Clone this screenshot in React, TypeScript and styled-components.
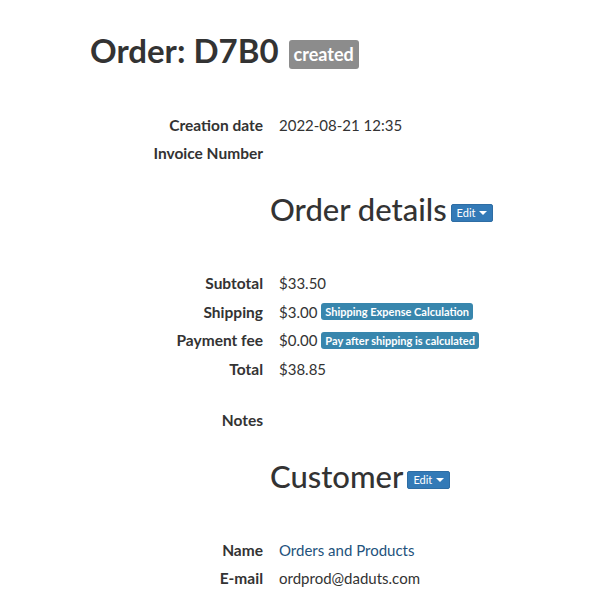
import React from 'react'
import styled, { createGlobalStyle } from 'styled-components'

const GlobalStyle = createGlobalStyle`
  body {
    margin: 0;
    background: #fff;
    color: #333;
    font-family: Lato, "Noto Sans", sans-serif;
    font-size: 15px;
  }
`

const Page = styled.main`
  padding: 26px 0 0 90px;
`

const Title = styled.h1`
  display: flex;
  align-items: center;
  gap: 10px;
  margin: 0 0 37px;
  font-size: 33px;
  font-weight: 700;
  line-height: 48px;
`

const Label = styled.span`
  display: inline-block;
  margin-top: 9px;
  padding: 3px 5px 4px;
  border-radius: 3px;
  background: #8c8c8c;
  color: #fff;
  font-size: 18px;
  font-weight: 700;
  line-height: 22px;
`

const Section = styled.h2`
  display: flex;
  align-items: center;
  gap: 4px;
  margin: 22px 0 40px 180px;
  font-size: 31px;
  font-weight: 500;
  line-height: 40px;
`

const EditButton = styled.button`
  display: inline-flex;
  align-items: center;
  gap: 4px;
  height: 18px;
  padding: 0 5px;
  margin-top: 8px;
  border: 1px solid #2e6da4;
  border-radius: 2px;
  background: #337ab7;
  color: #fff;
  font-family: inherit;
  font-size: 11px;
  line-height: 16px;
  cursor: pointer;
`

const Caret = styled.span`
  width: 0;
  height: 0;
  border-top: 4px solid #fff;
  border-left: 4px solid transparent;
  border-right: 4px solid transparent;
`

const List = styled.dl<{ $row?: number }>`
  display: grid;
  grid-template-columns: 173px auto;
  grid-auto-rows: ${p => p.$row ?? 28}px;
  column-gap: 16px;
  margin: 0;
`

const Term = styled.dt`
  display: flex;
  align-items: center;
  justify-content: flex-end;
  font-size: 15.5px;
  font-weight: 700;
`

const Value = styled.dd`
  display: flex;
  align-items: center;
  gap: 4px;
  margin: 0;
`

const Info = styled.span`
  display: inline-block;
  padding: 0 4px;
  border-radius: 3px;
  background: #3886ad;
  color: #fff;
  font-size: 11px;
  font-weight: 700;
  line-height: 17px;
`

const Notes = styled(List)`
  margin: 23px 0 0;
`

const Link = styled.a`
  color: #23527c;
  text-decoration: none;
`

function Edit() {
  return (
    <EditButton>
      Edit <Caret />
    </EditButton>
  )
}

export default function App() {
  return (
    <Page>
      <GlobalStyle />
      <Title>
        Order: D7B0 <Label>created</Label>
      </Title>

      <List>
        <Term>Creation date</Term>
        <Value>2022-08-21 12:35</Value>
        <Term>Invoice Number</Term>
        <Value />
      </List>

      <Section>
        Order details <Edit />
      </Section>

      <List $row={28.5}>
        <Term>Subtotal</Term>
        <Value>$33.50</Value>
        <Term>Shipping</Term>
        <Value>
          $3.00 <Info>Shipping Expense Calculation</Info>
        </Value>
        <Term>Payment fee</Term>
        <Value>
          $0.00 <Info>Pay after shipping is calculated</Info>
        </Value>
        <Term>Total</Term>
        <Value>$38.85</Value>
      </List>

      <Notes>
        <Term>Notes</Term>
        <Value />
      </Notes>

      <Section>
        Customer <Edit />
      </Section>

      <List>
        <Term>Name</Term>
        <Value>
          <Link href="#">Orders and Products</Link>
        </Value>
        <Term>E-mail</Term>
        <Value>ordprod@daduts.com</Value>
      </List>
    </Page>
  )
}
